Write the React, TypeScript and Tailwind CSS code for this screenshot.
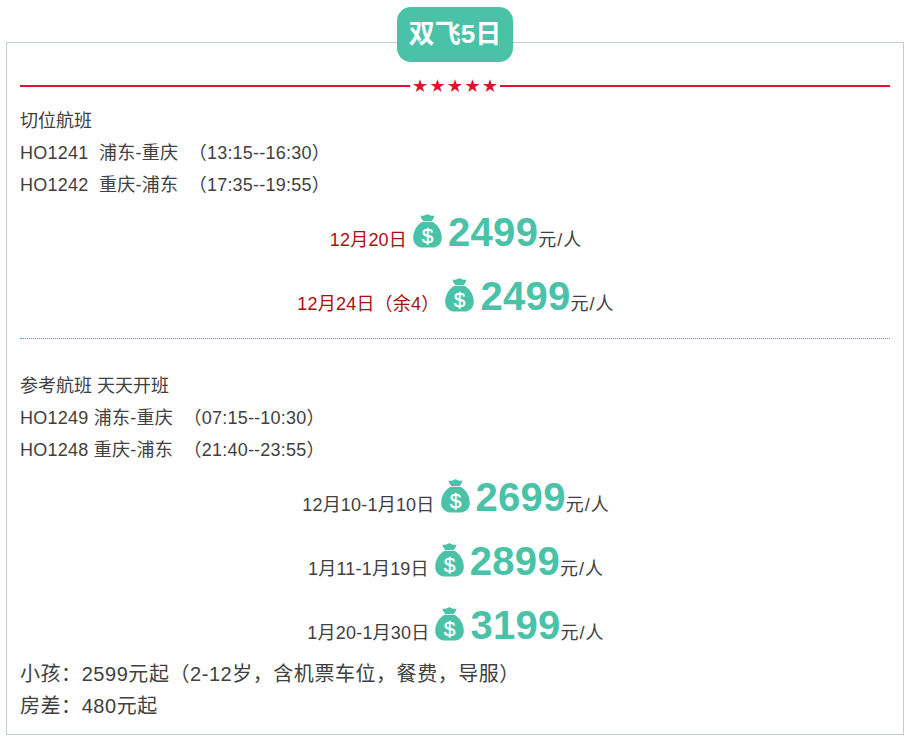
const font = { fontFamily: '"Liberation Sans", "Noto Sans CJK SC", sans-serif' };

function MoneyBag() {
  return (
    <svg className="w-[29px] h-[35px] shrink-0" viewBox="0 0 29 35">
      <path
        fill="#49c2a8"
        d="M7.500 2.500c2.200 .8 4.700 .2 7-1.500 2.300 1.700 4.800 2.300 7 1.500-.3 2-1.500 3.800-2.800 5.600h-8.400C9 6.500 7.800 4.500 7.500 2.500zM10 8.800h9c4.800 1.700 9.800 8.400 9.800 15.900 0 6.500-4.500 9.800-9.800 9.800h-9C4.700 34.500 .200 31.200 .200 24.700.200 17.200 5.200 10.500 10 8.800z"
      />
      <text x="14.500" y="29.500" textAnchor="middle" fontSize="21" fill="#fff" stroke="#fff" strokeWidth="0.3" fontFamily="Liberation Sans, sans-serif">
        $
      </text>
    </svg>
  );
}

function PriceRow({ label, price, red }: { label: string; price: string; red?: boolean }) {
  return (
    <div className="flex justify-center items-baseline h-[64px] pt-[1px] pl-[2px]">
      <span className={red ? 'text-[#a80f0f] tracking-[0.2px]' : 'text-[#404040] tracking-[0.2px]'}>{label}</span>
      <span className="self-start mt-[3px] mx-[6px]">
        <MoneyBag />
      </span>
      <span className="text-[40px] leading-[44px] font-bold tracking-[0.3px] text-[#49c2a8]">{price}</span>
      <span className="tracking-[1px]">元/人</span>
    </div>
  );
}

function Stars() {
  return (
    <div className="flex items-center h-[2px] mt-[42px] mb-[18px]">
      <div className="flex-1 h-[2px] bg-[#dc1230]" />
      <div className="text-[#dc1230] text-[14.500px] leading-none pl-[3px] tracking-[3px] mt-[1px]">★★★★★</div>
      <div className="flex-1 h-[2px] bg-[#dc1230]" />
    </div>
  );
}

export default function App() {
  return (
    <div className="h-[744px] bg-white pt-[42px] px-[6px] text-[18px] leading-[32px] text-[#404040]" style={font}>
      <div className="relative w-[898px] h-[693px] border border-[#c0ccd6] px-[13px]">
        <div className="absolute top-[-36px] left-[390px] w-[116px] h-[55px] rounded-[14px] bg-[#49c2a8] text-white text-[26px] font-bold leading-[55px] text-center">
          双飞5日
        </div>
        <Stars />
        <div>切位航班</div>
        <div className="whitespace-pre tracking-[0.24px]">HO1241  浦东-重庆  （13:15--16:30）</div>
        <div className="whitespace-pre tracking-[0.24px]">HO1242  重庆-浦东  （17:35--19:55）</div>
        <div className="mt-[8px]">
          <PriceRow label="12月20日" price="2499" red />
          <PriceRow label="12月24日（余4）" price="2499" red />
        </div>
        <div className="border-t border-dotted border-[#3fa894] mt-[1px] mb-[31px]" />
        <div>参考航班 天天开班</div>
        <div className="whitespace-pre tracking-[0.24px]">HO1249 浦东-重庆  （07:15--10:30）</div>
        <div className="whitespace-pre tracking-[0.24px]">HO1248 重庆-浦东  （21:40--23:55）</div>
        <div className="mt-[8px]">
          <PriceRow label="12月10-1月10日" price="2699" />
          <PriceRow label="1月11-1月19日" price="2899" />
          <PriceRow label="1月20-1月30日" price="3199" />
        </div>
        <div className="text-[20px] tracking-[0.55px] -mt-[8px]">小孩：2599元起（2-12岁，含机票车位，餐费，导服）</div>
        <div className="text-[20px] tracking-[0.55px]">房差：480元起</div>
      </div>
    </div>
  );
}
